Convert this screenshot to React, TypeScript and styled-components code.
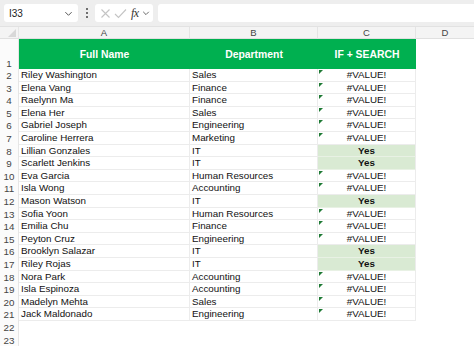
import React from 'react'
import styled, { createGlobalStyle } from 'styled-components'

const GlobalStyle = createGlobalStyle`
  html, body {
    margin: 0;
    padding: 0;
    background: #ffffff;
    font-family: "Liberation Sans", Arial, sans-serif;
    overflow: hidden;
  }
`

interface Row {
  name: string
  dept: string
  match: boolean
}

const rows: Row[] = [
  { name: 'Riley Washington', dept: 'Sales', match: false },
  { name: 'Elena Vang', dept: 'Finance', match: false },
  { name: 'Raelynn Ma', dept: 'Finance', match: false },
  { name: 'Elena Her', dept: 'Sales', match: false },
  { name: 'Gabriel Joseph', dept: 'Engineering', match: false },
  { name: 'Caroline Herrera', dept: 'Marketing', match: false },
  { name: 'Lillian Gonzales', dept: 'IT', match: true },
  { name: 'Scarlett Jenkins', dept: 'IT', match: true },
  { name: 'Eva Garcia', dept: 'Human Resources', match: false },
  { name: 'Isla Wong', dept: 'Accounting', match: false },
  { name: 'Mason Watson', dept: 'IT', match: true },
  { name: 'Sofia Yoon', dept: 'Human Resources', match: false },
  { name: 'Emilia Chu', dept: 'Finance', match: false },
  { name: 'Peyton Cruz', dept: 'Engineering', match: false },
  { name: 'Brooklyn Salazar', dept: 'IT', match: true },
  { name: 'Riley Rojas', dept: 'IT', match: true },
  { name: 'Nora Park', dept: 'Accounting', match: false },
  { name: 'Isla Espinoza', dept: 'Accounting', match: false },
  { name: 'Madelyn Mehta', dept: 'Sales', match: false },
  { name: 'Jack Maldonado', dept: 'Engineering', match: false }
]

export default function App () {
  return (
    <>
      <GlobalStyle />
      <Page>
        <Toolbar>
          <NameBox>
            <span>I33</span>
            <Chevron size={9} />
          </NameBox>
          <Dots>
            <i /><i /><i />
          </Dots>
          <FormulaTools>
            <svg width="11" height="11" viewBox="0 0 11 11">
              <path d="M1.5 1.5 L9.5 9.5 M9.5 1.5 L1.5 9.5" stroke="#c4c4c4" strokeWidth="1.1" fill="none" />
            </svg>
            <svg width="13" height="11" viewBox="0 0 13 11">
              <path d="M1 6 L4.5 9.5 L12 1.5" stroke="#c4c4c4" strokeWidth="1.1" fill="none" />
            </svg>
            <Fx>fx</Fx>
            <Chevron size={8} />
          </FormulaTools>
          <FormulaInput />
        </Toolbar>

        <Sheet>
          <Corner>
            <svg width="8" height="8" viewBox="0 0 8 8">
              <path d="M8 0 L8 8 L0 8 Z" fill="#d8d8d8" />
            </svg>
          </Corner>
          <ColHeader>A</ColHeader>
          <ColHeader>B</ColHeader>
          <ColHeader>C</ColHeader>
          <ColHeader $last>D</ColHeader>

          <RowNum>1</RowNum>
          <HeadCell>Full Name</HeadCell>
          <HeadCell>Department</HeadCell>
          <HeadCell>IF + SEARCH</HeadCell>
          <Blank />

          {rows.map((r, i) => (
            <React.Fragment key={r.name + i}>
              <RowNum>{i + 2}</RowNum>
              <Cell>{r.name}</Cell>
              <Cell>{r.dept}</Cell>
              <ResultCell $match={r.match}>
                {!r.match && <ErrorMark />}
                {r.match ? 'Yes' : '#VALUE!'}
              </ResultCell>
              <Blank />
            </React.Fragment>
          ))}

          {[22, 23].map(n => (
            <React.Fragment key={n}>
              <RowNum>{n}</RowNum>
              <Blank />
              <Blank />
              <Blank />
              <Blank />
            </React.Fragment>
          ))}
        </Sheet>
      </Page>
    </>
  )
}

function Chevron ({ size }: { size: number }) {
  return (
    <svg width={size} height={size} viewBox="0 0 10 10">
      <path d="M1.5 3.5 L5 7 L8.5 3.5" stroke="#555" strokeWidth="1.1" fill="none" />
    </svg>
  )
}

const Page = styled.div`
  width: 474px;
  height: 346px;
  display: flex;
  flex-direction: column;
  background: #ffffff;
  overflow: hidden;
`

const Toolbar = styled.div`
  flex: 0 0 27px;
  height: 27px;
  box-sizing: border-box;
  padding: 4px 0 4px 4px;
  display: flex;
  align-items: stretch;
  background: #eeeeee;
  border-bottom: 1px solid #e2e2e2;
`

const NameBox = styled.div`
  width: 74px;
  box-sizing: border-box;
  display: flex;
  align-items: center;
  justify-content: space-between;
  padding: 0 5px 0 5px;
  background: #ffffff;
  border-radius: 3px;
  font-size: 10px;
  color: #222;
`

const Dots = styled.div`
  width: 17px;
  display: flex;
  flex-direction: column;
  align-items: center;
  justify-content: center;
  gap: 2px;

  & i {
    display: block;
    width: 2px;
    height: 2px;
    border-radius: 1px;
    background: #444;
  }
`

const FormulaTools = styled.div`
  width: 58px;
  box-sizing: border-box;
  display: flex;
  align-items: center;
  justify-content: space-between;
  padding: 0 3px 0 5px;
  background: #ffffff;
  border-radius: 3px;
`

const Fx = styled.span`
  font-family: "Liberation Serif", "Times New Roman", serif;
  font-style: italic;
  font-size: 12px;
  color: #333;
  letter-spacing: -0.5px;
`

const FormulaInput = styled.div`
  flex: 1;
  margin-left: 5px;
  background: #ffffff;
  border-radius: 3px 0 0 3px;
`

const Sheet = styled.div`
  flex: 0 0 auto;
  display: grid;
  grid-template-columns: 19px 171px 128px 98px 1fr;
  grid-template-rows: 12px 30px repeat(22, 12.6px);
  font-size: 9.8px;
  color: #111;
`

const Corner = styled.div`
  display: flex;
  align-items: flex-end;
  justify-content: flex-end;
  padding: 0 2px 1px 0;
  background: #f4f4f4;
  border-bottom: 1px solid #e0e0e0;
  border-right: 1px solid #e6e6e6;
`

const ColHeader = styled.div<{ $last?: boolean }>`
  display: flex;
  align-items: center;
  justify-content: center;
  background: #f4f4f4;
  color: #444;
  font-size: 9.5px;
  border-bottom: 1px solid #e0e0e0;
  border-right: ${p => (p.$last ? 'none' : '1px solid #e4e4e4')};
`

const RowNum = styled.div`
  display: flex;
  align-items: flex-end;
  justify-content: center;
  color: #444;
  font-size: 9.8px;
  line-height: 11.5px;
  background: #fbfbfb;
  border-right: 1px solid #e6e6e6;
`

const HeadCell = styled.div`
  display: flex;
  align-items: center;
  justify-content: center;
  background: #00b050;
  color: #ffffff;
  font-weight: bold;
  font-size: 10.4px;
`

const Cell = styled.div`
  display: flex;
  align-items: flex-end;
  padding: 0 0 0 2px;
  line-height: 11.5px;
  white-space: nowrap;
  overflow: hidden;
  border-bottom: 1px solid #ececec;
  border-right: 1px solid #ececec;
`

const ResultCell = styled.div<{ $match: boolean }>`
  position: relative;
  display: flex;
  align-items: flex-end;
  justify-content: center;
  line-height: 11.5px;
  font-weight: ${p => (p.$match ? 'bold' : 'normal')};
  background: ${p => (p.$match ? '#d9ead3' : '#ffffff')};
  border-bottom: 1px solid ${p => (p.$match ? '#e8f1e4' : '#ececec')};
  border-right: 1px solid #ececec;
`

const ErrorMark = styled.span`
  position: absolute;
  left: 1px;
  top: 1px;
  width: 0;
  height: 0;
  border-top: 4px solid #1f7a35;
  border-right: 4px solid transparent;
`

const Blank = styled.div`
  background: #ffffff;
`
